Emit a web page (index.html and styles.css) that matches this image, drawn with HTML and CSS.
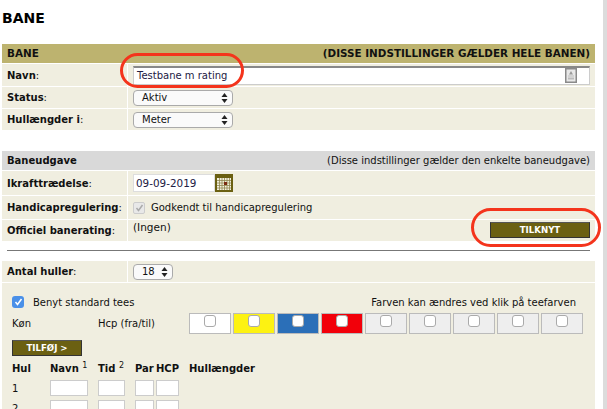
FILE: index.html
```html
<!DOCTYPE html>
<html lang="da">
<head>
<meta charset="utf-8">
<title>Bane</title>
<link rel="stylesheet" href="styles.css">
</head>
<body>
<main class="page">
  <h1 class="title">BANE</h1>

  <section class="group group-course">
    <div class="bar bar-olive"><span>BANE</span><span>(DISSE INDSTILLINGER GÆLDER HELE BANEN)</span></div>
    <div class="row row-name">
      <label class="key">Navn<i>:</i></label>
      <div class="val">
        <div class="textbox"><span>Testbane m rating</span>
          <svg class="keyicon" width="12" height="15" viewBox="0 0 12 15"><rect x=".75" y=".75" width="10.500" height="13.500" fill="#e8e8e8" stroke="#8a8a8a" stroke-width="1.500"/><path d="M6 3l2 3.500H4z" fill="#999"/><rect x="3" y="7.500" width="6" height="1" fill="#bbb"/><rect x="3" y="9.500" width="6" height="2" fill="#bbb"/></svg>
        </div>
      </div>
    </div>
    <div class="row row-select">
      <label class="key">Status<i>:</i></label>
      <div class="val"><div class="select wide">Aktiv<svg class="updown" width="7" height="10" viewBox="0 0 7 10"><path d="M3.500 0L6.500 4H.5zM3.500 10L.5 6h6z"/></svg></div></div>
    </div>
    <div class="row row-select">
      <label class="key">Hullængder i<i>:</i></label>
      <div class="val"><div class="select wide">Meter<svg class="updown" width="7" height="10" viewBox="0 0 7 10"><path d="M3.500 0L6.500 4H.5zM3.500 10L.5 6h6z"/></svg></div></div>
    </div>
  </section>

  <section class="group group-edition">
    <div class="bar bar-grey"><b>Baneudgave</b><span>(Disse indstillinger gælder den enkelte baneudgave)</span></div>
    <div class="row row-date">
      <label class="key">Ikrafttrædelse<i>:</i></label>
      <div class="val date">
        <div class="datebox">09-09-2019</div>
        <svg class="calendar" width="18" height="18" viewBox="0 0 18 18"><rect width="18" height="18" fill="#6b6012"/><rect x="2" y="4" width="14" height="12" fill="#f3f0dc"/><path d="M2 6.500h14M2 9h14M2 11.500h14M2 14h14M4.500 4v12M7 4v12M9.500 4v12M12 4v12M14.500 4v12" stroke="#8f8750" stroke-width=".8"/><rect x="9" y="8" width="3" height="3" fill="#7a2a10"/></svg>
      </div>
    </div>
    <div class="row row-check">
      <label class="key">Handicapregulering<i>:</i></label>
      <div class="val check">
        <span class="box box-disabled"><svg width="9" height="8" viewBox="0 0 9 8"><path d="M1.500 4l2 2.500L7.500 1" fill="none" stroke="#aaa" stroke-width="1.500"/></svg></span>
        <span>Godkendt til handicapregulering</span>
      </div>
    </div>
    <div class="row row-rating">
      <label class="key">Officiel banerating<i>:</i></label>
      <div class="val rating"><span class="none">(Ingen)</span><button class="btn btn-link" type="button">TILKNYT</button></div>
    </div>
  </section>

  <hr class="rule">

  <section class="group group-holes">
    <div class="row row-holes">
      <label class="key">Antal huller<i>:</i></label>
      <div class="val"><div class="select narrow">18<svg class="updown" width="7" height="10" viewBox="0 0 7 10"><path d="M3.500 0L6.500 4H.5zM3.500 10L.5 6h6z"/></svg></div></div>
    </div>
    <div class="tees">
      <div class="tee-top">
        <div class="std">
          <span class="box box-on"><svg width="9" height="8" viewBox="0 0 9 8"><path d="M1.500 4l2 2.500L7.500 1" fill="none" stroke="#fff" stroke-width="1.500"/></svg></span>
          <span class="std-label">Benyt standard tees</span>
        </div>
        <span class="hint">Farven kan ændres ved klik på teefarven</span>
      </div>
      <div class="tee-line">
        <span class="gender">Køn</span>
        <span class="hcp">Hcp (fra/til)</span>
        <div class="swatches">
          <span class="swatch s-white"><i></i></span>
          <span class="swatch s-yellow"><i></i></span>
          <span class="swatch s-blue"><i></i></span>
          <span class="swatch s-red"><i></i></span>
          <span class="swatch"><i></i></span>
          <span class="swatch"><i></i></span>
          <span class="swatch"><i></i></span>
          <span class="swatch"><i></i></span>
          <span class="swatch"><i></i></span>
        </div>
      </div>
      <button class="btn btn-add" type="button">TILFØJ &gt;</button>
      <div class="holes">
        <b class="c1">Hul</b><b class="c2">Navn <sup>1</sup></b><b class="c3">Tid <sup>2</sup></b><b class="c4">Par</b><b class="c5">HCP</b><b class="c6">Hullængder</b>
        <span class="c1">1</span><span class="cell c2"></span><span class="cell c3"></span><span class="cell c4"></span><span class="cell c5"></span><span class="c6"></span>
        <span class="c1">2</span><span class="cell c2"></span><span class="cell c3"></span><span class="cell c4"></span><span class="cell c5"></span><span class="c6"></span>
      </div>
    </div>
  </section>

  <div class="ring ring-name"></div>
  <div class="ring ring-link"></div>
</main>
<div class="edge"></div>
</body>
</html>
```
FILE: styles.css
```css
* { box-sizing: border-box; }
html, body { margin: 0; height: 409px; overflow: hidden; background: #fff; }
body { font: 10px/13px "DejaVu Sans", Verdana, sans-serif; color: #111; }
.page { width: 595px; padding-left: 2px; position: relative; }
.title { margin: 0; padding-top: 10px; height: 44px; font-size: 14px; line-height: 16px; font-weight: bold; color: #000; }
.group-edition { margin-top: 21px; }
.bar { height: 20px; display: flex; justify-content: space-between; align-items: center; padding: 0 5px 0 5px; border-bottom: 1px solid #fff; }
.bar-olive { background: #bdb36f; font-weight: bold; font-size: 10.400px; }
.bar-grey { background: #d9d9d9; }
.row { display: flex; background: #f0eee0; border-bottom: 1px solid #fff; }
.key { width: 125px; flex: none; padding-left: 5px; font-weight: bold; display: flex; align-items: center; }
.key i { font-style: normal; font-weight: normal; }
.val { flex: 1; border-left: 1px solid #fff; padding-left: 5px; display: flex; align-items: center; min-width: 0; }
.row-name { height: 23px; }
.row-select { height: 22px; }
.row-select:last-child { border-bottom: 0; height: 21px; }
.row-date { height: 25px; }
.row-check { height: 24px; }
.row-rating { height: 21px; border-bottom: 0; }
.row-holes { height: 22px; }
.textbox { flex: none; width: 457px; height: 19px; background: #fff; border: 1px solid #ccc; border-top: 2px solid #888; padding-left: 3px; display: flex; align-items: center; justify-content: space-between; color: #222044; }
.keyicon { margin-right: 12px; }
.select { height: 16px; border: 1px solid #aaa; border-radius: 4px; background: #fafafa; padding: 0 4px 0 8px; display: flex; align-items: center; justify-content: space-between; }
.wide { width: 100px; }
.narrow { width: 40px; }
.updown { fill: #222; }
.datebox { width: 82px; height: 18px; background: #fff; border: 1px solid #ddd; padding-left: 2px; display: flex; align-items: center; font-size: 10.400px; color: #222044; }
.check { gap: 6px; }
.box { width: 12px; height: 12px; border-radius: 2px; display: flex; align-items: center; justify-content: center; flex: none; }
.box-disabled { background: #e8e8e8; border: 1px solid #ccc; }
.box-on { background: #4a90e8; border-radius: 3px; }
.rating { justify-content: space-between; align-items: flex-start; padding-right: 5px; padding-top: 1px; }
.none { font-size: 10.500px; }
.btn { border: 1px solid #333; border-top-color: #555; background: #6b6012; color: #fff; font: bold 8.600px/13px "DejaVu Sans", sans-serif; padding: 0; }
.btn-link { width: 100px; height: 16px; margin-top: 1px; }
.rule { height: 1px; border: 0; background: #777; margin: 9px 5px 10px 5px; }
.tees { background: #f0eee0; height: 126px; padding: 9px 0 0 10px; }
.tee-top { display: flex; justify-content: space-between; align-items: center; padding-right: 19px; height: 19px; }
.std { display: flex; gap: 9px; align-items: center; }
.std-label, .hint { padding-top: 2px; }
.tee-line { display: flex; align-items: center; margin-top: 2px; height: 21px; }
.gender { width: 86px; }
.hcp { width: 91px; }
.swatches { display: flex; gap: 2px; }
.swatch { width: 42px; height: 21px; background: #eee; border: 1px solid #bbb; display: flex; justify-content: center; padding-top: 1px; }
.swatch i { width: 12px; height: 12px; background: #fff; border: 1px solid #aaa; border-radius: 3px; }
.s-white { background: #fff; }
.s-yellow { background: #fdf212; }
.s-blue { background: #2b6fb8; }
.s-red { background: #f2000a; }
.btn-add { display: block; width: 70px; height: 16px; margin-top: 6px; }
.holes { display: grid; grid-template-columns: 38px 48px 37px 21px 33px 70px; grid-auto-rows: 20px; margin-top: 2px; align-items: center; }
.holes b { font-weight: bold; white-space: nowrap; }
.holes sup { font-weight: normal; font-size: 8px; line-height: 0; }
.cell { height: 16px; background: #fff; border: 1px solid #ccc; margin-right: 2px; }
.cell.c2, .cell.c3, .cell.c5 { margin-right: 10px; }
.ring { position: absolute; border: 3px solid #f4341c; border-radius: 18px; }
.ring-name { left: 120px; top: 53px; width: 124px; height: 35px; }
.ring-link { left: 471px; top: 208px; width: 130px; height: 39px; border-radius: 20px; }
.edge { position: absolute; left: 603px; top: 0; width: 4px; height: 409px; background: #dcdcdc; }
```
